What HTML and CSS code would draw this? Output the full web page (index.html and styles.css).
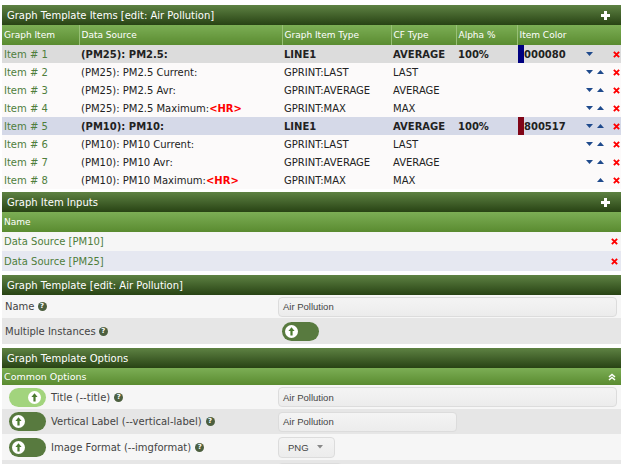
FILE: index.html
```html
<!DOCTYPE html>
<html>
<head>
<meta charset="utf-8">
<title>Graph Template</title>
<link rel="stylesheet" href="styles.css">
</head>
<body>
<div class="page">

  <section class="panel">
    <div class="title"><span>Graph Template Items [edit: Air Pollution]</span>
      <svg class="plus" viewBox="0 0 9 9"><rect x="3" y="0" width="3" height="9" fill="#fff"/><rect x="0" y="3" width="9" height="3" fill="#fff"/></svg>
    </div>
    <table class="items">
      <colgroup>
        <col style="width:77px"><col style="width:203px"><col style="width:109px"><col style="width:65px"><col style="width:61px"><col style="width:64px"><col style="width:29px"><col style="width:11px">
      </colgroup>
      <thead>
        <tr><th>Graph Item</th><th>Data Source</th><th>Graph Item Type</th><th>CF Type</th><th>Alpha %</th><th>Item Color</th><th class="nosep"></th><th class="nosep"></th></tr>
      </thead>
      <tbody>
        <tr class="hl1"><td class="lnk">Item # 1</td><td>(PM25): PM2.5:</td><td>LINE1</td><td>AVERAGE</td><td>100%</td>
          <td class="clr"><div class="cbox"><span class="sw" style="background:#000080"></span>000080</div></td>
          <td class="mv"><div class="arrows"><svg class="dn" viewBox="0 0 7 4"><polygon points="0,0 7,0 3.5,4"/></svg><span class="empty"></span></div></td>
          <td class="del"><svg class="x" viewBox="0 0 8 8"><path d="M1 1L7 7M7 1L1 7"/></svg></td></tr>
        <tr><td class="lnk">Item # 2</td><td>(PM25): PM2.5 Current:</td><td>GPRINT:LAST</td><td>LAST</td><td></td><td></td>
          <td class="mv"><div class="arrows"><svg class="dn" viewBox="0 0 7 4"><polygon points="0,0 7,0 3.5,4"/></svg><svg class="up" viewBox="0 0 7 4"><polygon points="3.5,0 7,4 0,4"/></svg></div></td>
          <td class="del"><svg class="x" viewBox="0 0 8 8"><path d="M1 1L7 7M7 1L1 7"/></svg></td></tr>
        <tr><td class="lnk">Item # 3</td><td>(PM25): PM2.5 Avr:</td><td>GPRINT:AVERAGE</td><td>AVERAGE</td><td></td><td></td>
          <td class="mv"><div class="arrows"><svg class="dn" viewBox="0 0 7 4"><polygon points="0,0 7,0 3.5,4"/></svg><svg class="up" viewBox="0 0 7 4"><polygon points="3.5,0 7,4 0,4"/></svg></div></td>
          <td class="del"><svg class="x" viewBox="0 0 8 8"><path d="M1 1L7 7M7 1L1 7"/></svg></td></tr>
        <tr><td class="lnk">Item # 4</td><td>(PM25): PM2.5 Maximum:<b class="hr">&lt;HR&gt;</b></td><td>GPRINT:MAX</td><td>MAX</td><td></td><td></td>
          <td class="mv"><div class="arrows"><svg class="dn" viewBox="0 0 7 4"><polygon points="0,0 7,0 3.5,4"/></svg><svg class="up" viewBox="0 0 7 4"><polygon points="3.5,0 7,4 0,4"/></svg></div></td>
          <td class="del"><svg class="x" viewBox="0 0 8 8"><path d="M1 1L7 7M7 1L1 7"/></svg></td></tr>
        <tr class="hl2"><td class="lnk">Item # 5</td><td>(PM10): PM10:</td><td>LINE1</td><td>AVERAGE</td><td>100%</td>
          <td class="clr"><div class="cbox"><span class="sw" style="background:#800517"></span>800517</div></td>
          <td class="mv"><div class="arrows"><svg class="dn" viewBox="0 0 7 4"><polygon points="0,0 7,0 3.5,4"/></svg><svg class="up" viewBox="0 0 7 4"><polygon points="3.5,0 7,4 0,4"/></svg></div></td>
          <td class="del"><svg class="x" viewBox="0 0 8 8"><path d="M1 1L7 7M7 1L1 7"/></svg></td></tr>
        <tr><td class="lnk">Item # 6</td><td>(PM10): PM10 Current:</td><td>GPRINT:LAST</td><td>LAST</td><td></td><td></td>
          <td class="mv"><div class="arrows"><svg class="dn" viewBox="0 0 7 4"><polygon points="0,0 7,0 3.5,4"/></svg><svg class="up" viewBox="0 0 7 4"><polygon points="3.5,0 7,4 0,4"/></svg></div></td>
          <td class="del"><svg class="x" viewBox="0 0 8 8"><path d="M1 1L7 7M7 1L1 7"/></svg></td></tr>
        <tr><td class="lnk">Item # 7</td><td>(PM10): PM10 Avr:</td><td>GPRINT:AVERAGE</td><td>AVERAGE</td><td></td><td></td>
          <td class="mv"><div class="arrows"><svg class="dn" viewBox="0 0 7 4"><polygon points="0,0 7,0 3.5,4"/></svg><svg class="up" viewBox="0 0 7 4"><polygon points="3.5,0 7,4 0,4"/></svg></div></td>
          <td class="del"><svg class="x" viewBox="0 0 8 8"><path d="M1 1L7 7M7 1L1 7"/></svg></td></tr>
        <tr><td class="lnk">Item # 8</td><td>(PM10): PM10 Maximum:<b class="hr">&lt;HR&gt;</b></td><td>GPRINT:MAX</td><td>MAX</td><td></td><td></td>
          <td class="mv"><div class="arrows"><span class="empty"></span><svg class="up" viewBox="0 0 7 4"><polygon points="3.5,0 7,4 0,4"/></svg></div></td>
          <td class="del"><svg class="x" viewBox="0 0 8 8"><path d="M1 1L7 7M7 1L1 7"/></svg></td></tr>
      </tbody>
    </table>
  </section>

  <section class="panel gap4">
    <div class="title"><span>Graph Item Inputs</span>
      <svg class="plus" viewBox="0 0 9 9"><rect x="3" y="0" width="3" height="9" fill="#fff"/><rect x="0" y="3" width="9" height="3" fill="#fff"/></svg>
    </div>
    <div class="subhead">Name</div>
    <div class="dsrow odd"><span class="lnk">Data Source [PM10]</span><svg class="x" viewBox="0 0 8 8"><path d="M1 1L7 7M7 1L1 7"/></svg></div>
    <div class="dsrow even"><span class="lnk">Data Source [PM25]</span><svg class="x" viewBox="0 0 8 8"><path d="M1 1L7 7M7 1L1 7"/></svg></div>
  </section>

  <section class="panel gap4">
    <div class="title"><span>Graph Template [edit: Air Pollution]</span></div>
    <div class="frow odd r23">
      <div class="flabel">Name <span class="help">?</span></div>
      <div class="fval"><div class="input wide">Air Pollution</div></div>
    </div>
    <div class="frow even r26">
      <div class="flabel">Multiple Instances <span class="help">?</span></div>
      <div class="fval"><div class="toggle off ml4"><span class="knob"><svg viewBox="0 0 13 13"><circle cx="6.5" cy="6.5" r="6.5" fill="#fff"/><polygon points="6.5,2.3 9.6,6 7.6,6 7.6,10.6 5.4,10.6 5.4,6 3.4,6" fill="#4b7b2f"/></svg></span></div></div>
    </div>
  </section>

  <section class="panel">
    <div class="title"><span>Graph Template Options</span></div>
    <div class="subhead common"><span>Common Options</span>
      <svg class="chev" viewBox="0 0 8 8"><path d="M1 4L4 1.5L7 4M1 7L4 4.5L7 7" fill="none" stroke="#fff" stroke-width="1.6"/></svg>
    </div>
    <div class="frow odd r24">
      <div class="flabel tg"><div class="toggle on"><span class="knob"><svg viewBox="0 0 13 13"><circle cx="6.5" cy="6.5" r="6.5" fill="#fff"/><polygon points="6.5,2.3 9.6,6 7.6,6 7.6,10.6 5.4,10.6 5.4,6 3.4,6" fill="#4b7b2f"/></svg></span></div>Title (--title) <span class="help">?</span></div>
      <div class="fval"><div class="input wide">Air Pollution</div></div>
    </div>
    <div class="frow even r25">
      <div class="flabel tg"><div class="toggle off"><span class="knob"><svg viewBox="0 0 13 13"><circle cx="6.5" cy="6.5" r="6.5" fill="#fff"/><polygon points="6.5,2.3 9.6,6 7.6,6 7.6,10.6 5.4,10.6 5.4,6 3.4,6" fill="#4b7b2f"/></svg></span></div>Vertical Label (--vertical-label) <span class="help">?</span></div>
      <div class="fval"><div class="input mid">Air Pollution</div></div>
    </div>
    <div class="frow odd r26">
      <div class="flabel tg"><div class="toggle off"><span class="knob"><svg viewBox="0 0 13 13"><circle cx="6.5" cy="6.5" r="6.5" fill="#fff"/><polygon points="6.5,2.3 9.6,6 7.6,6 7.6,10.6 5.4,10.6 5.4,6 3.4,6" fill="#4b7b2f"/></svg></span></div>Image Format (--imgformat) <span class="help">?</span></div>
      <div class="fval"><div class="input sel">PNG <svg class="caret" viewBox="0 0 6 4"><polygon points="0,0 6,0 3,3.5" fill="#888"/></svg></div></div>
    </div>
    <div class="frow even r26 tail">
      <div class="flabel"></div>
      <div class="fval"><div class="input small"></div></div>
    </div>
  </section>

</div>
</body>
</html>
```

FILE: styles.css
```css
* { box-sizing: border-box; }

body {
  margin: 0;
  background: #ffffff;
  font-family: "DejaVu Sans", Verdana, sans-serif;
  font-size: 10px;
  color: #222;
}

.page {
  padding: 5px 3px 0 2px;
}

.panel { margin-bottom: 3px; }
.panel.gap4 { margin-bottom: 4px; }

.title {
  height: 20px;
  display: flex;
  align-items: center;
  justify-content: space-between;
  padding: 0 11px 0 5px;
  color: #fff;
  font-size: 10px;
  background: linear-gradient(#5e8243, #284314);
}

.plus { width: 9px; height: 9px; display: block; }

table.items {
  width: 100%;
  border-collapse: collapse;
  table-layout: fixed;
}

.items th {
  height: 20px;
  padding: 0 2px;
  text-align: left;
  font-weight: normal;
  font-size: 9px;
  color: #fff;
  background: linear-gradient(#7cae55, #5a8b30);
  border-left: 1px solid #98c076;
}
.items th:first-child, .items th.nosep { border-left: none; }

.items td {
  height: 18px;
  padding: 0 2px;
  white-space: nowrap;
  overflow: hidden;
  background: #fcfafa;
  color: #222;
}

.items tr.hl1 td { background: #dcdcdc; font-weight: bold; }
.items tr.hl2 td { background: #d5d9e8; font-weight: bold; }
.items tr.hl1 td.lnk, .items tr.hl2 td.lnk { font-weight: normal; }

.lnk, .items td.lnk { color: #4f7e3c; }
.hr { color: #f00; font-weight: bold; }

.items td.clr { padding: 0 0 0 1px; }
.cbox { display: flex; align-items: center; height: 18px; }
.sw { width: 6px; height: 18px; display: block; }

.items td.mv { padding: 0 0 0 5px; }
.arrows { display: flex; align-items: center; gap: 4px; }
.arrows svg, .arrows .empty { width: 7px; height: 4px; display: block; }
.arrows polygon { fill: #1f4a8c; }
.arrows .up { margin-top: -1px; }

.items td.del { padding: 0 0 0 3px; }
.x { width: 7px; height: 7px; display: block; }
.x path { stroke: #f00; stroke-width: 2.2; fill: none; }

.subhead {
  height: 20px;
  display: flex;
  align-items: center;
  justify-content: space-between;
  padding: 0 4px 0 2px;
  font-size: 9px;
  color: #fff;
  background: linear-gradient(#7cae55, #5a8b30);
}
.subhead.common { height: 17px; font-size: 9.5px; padding-right: 5px; }
.chev { width: 8px; height: 8px; display: block; }

.dsrow {
  height: 19px;
  display: flex;
  align-items: center;
  justify-content: space-between;
  padding: 0 3px 0 2px;
}
.dsrow + .dsrow { height: 20px; }
.odd { background: #f6f6f6; }
.even { background: #e6e8f1; }

.frow {
  display: flex;
  align-items: center;
}
.frow.even { background: #e6e6e6; }
.frow.tail { align-items: flex-start; padding-top: 3px; }
.r23 { height: 23px; }
.r24 { height: 24px; }
.r25 { height: 25px; }
.r26 { height: 26px; }

.flabel {
  width: 276px;
  padding-left: 3px;
  color: #444;
  display: flex;
  align-items: center;
  gap: 3px;
}
.flabel.tg { padding-left: 7px; gap: 0; }
.flabel.tg .toggle { margin-right: 5px; }
.flabel.tg .help { margin-left: 4px; }

.help {
  width: 9px;
  height: 9px;
  border-radius: 50%;
  background: #4c5f3f;
  color: #fff;
  font-size: 7px;
  font-weight: bold;
  line-height: 9px;
  text-align: center;
  display: inline-block;
}

.fval { flex: 1; display: flex; align-items: center; }

.input {
  height: 20px;
  border: 1px solid #dcdcdc;
  border-radius: 4px;
  background: linear-gradient(#f4f4f4, #ececec);
  font-family: "Liberation Sans", Arial, sans-serif;
  font-size: 9.5px;
  color: #444;
  display: flex;
  align-items: center;
  padding-left: 4px;
}
.input.wide { width: 339px; }
.input.mid { width: 179px; }
.input.sel { width: 57px; padding-left: 9px; gap: 8px; height: 21px; }
.input.small { width: 64px; }
.caret { width: 6px; height: 4px; display: block; }

.toggle {
  width: 37px;
  height: 19px;
  border-radius: 10px;
  display: flex;
  align-items: center;
  padding: 0 3px;
}
.toggle.off { background: #587a3f; justify-content: flex-start; }
.toggle.on { background: #a2d47d; justify-content: flex-end; padding-right: 5px; }
.toggle.ml4 { margin-left: 4px; }
.knob { width: 13px; height: 13px; display: block; }
.knob svg { width: 13px; height: 13px; display: block; }
```
